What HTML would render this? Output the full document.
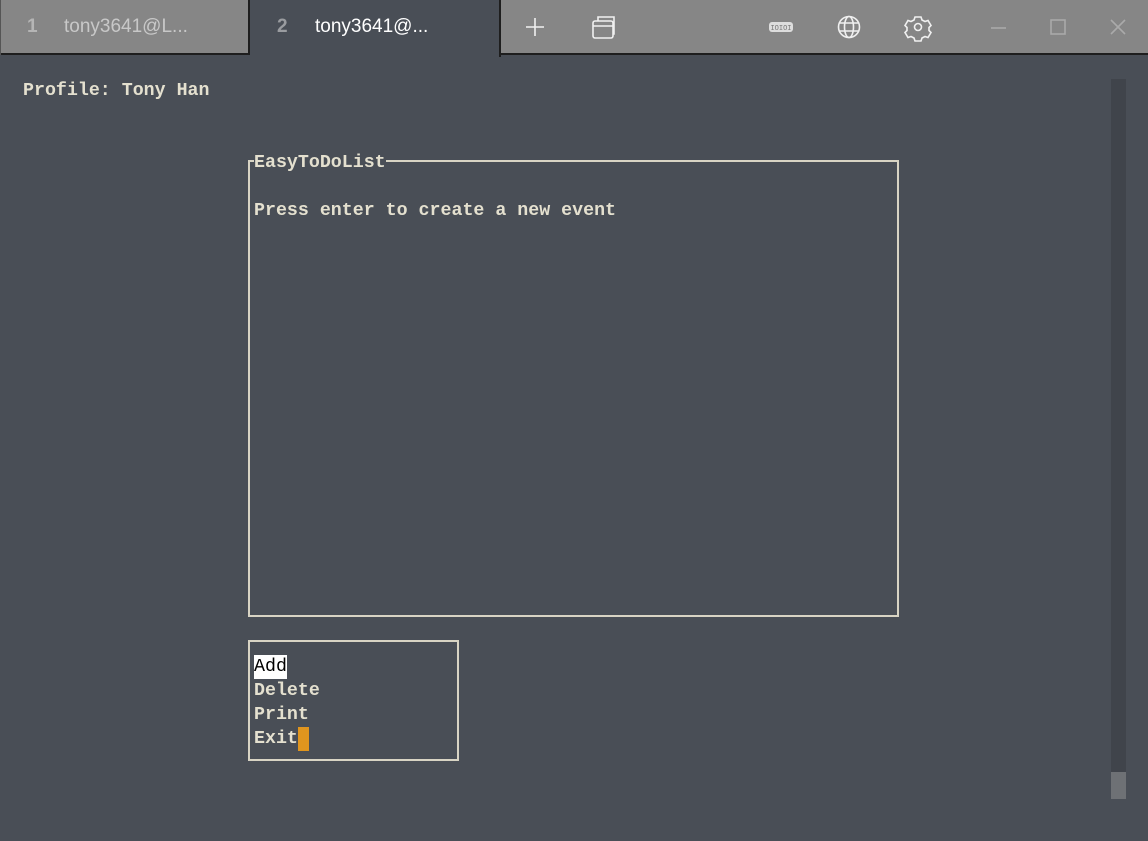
<!DOCTYPE html>
<html><head><meta charset="utf-8"><style>
*{margin:0;padding:0;box-sizing:border-box}
body{width:1148px;height:841px;background:#494e56;overflow:hidden;position:relative;font-family:"Liberation Sans",sans-serif}
.bar{position:absolute;left:0;top:0;width:1148px;height:55px;background:#868686;border-bottom:2px solid #1e1e1e}
.tab1{position:absolute;left:0;top:0;width:250px;height:55px;border-right:2px solid #1e1e1e;border-left:1px solid #555}
.tab2{position:absolute;left:250px;top:0;width:251px;height:57px;background:#494e56;border-right:2px solid #1e1e1e}
.t{position:absolute;top:16px;font-size:19px}
.mono{font-family:"Liberation Mono",monospace;font-weight:bold;font-size:18.3px;color:#e4e0cf;position:absolute;white-space:pre;line-height:24px}
.hl{position:absolute;background:#d8d4c4}
</style></head><body>
<div class="bar"></div>
<div class="tab1"><span class="t" style="left:26px;color:#b5b5b5;font-weight:bold">1</span><span class="t" style="left:63px;color:#c8c8c8">tony3641@L...</span></div>
<div class="tab2"><span class="t" style="left:27px;color:#9a9ca0;font-weight:bold">2</span><span class="t" style="left:65px;color:#fff">tony3641@...</span></div>
<svg style="position:absolute;left:0;top:0" width="1148" height="55" fill="none" stroke="#f0f0f0" stroke-width="1.6">
<path d="M526 27h18M535 18v18"/>
<rect x="593" y="21" width="20" height="17" rx="2"/><path d="M593 26h20M598 21v-4h16v17h-1"/>
<rect x="769" y="22" width="24" height="10" rx="3" fill="#ddd" stroke="none"/>
<text x="781" y="30" font-size="7" fill="#777" stroke="none" text-anchor="middle" font-family="Liberation Mono">IOIOI</text>
<circle cx="849" cy="27" r="10.5"/><ellipse cx="849" cy="27" rx="4.5" ry="10.5"/><path d="M839 23h20M839 31h20"/>
<circle cx="918" cy="27" r="3.5"/><path d="M915 17h6l1 3 3 1.5 3-1 3 5-2 2v3l2 2-3 5-3-1-3 1.5-1 3h-6l-1-3-3-1.5-3 1-3-5 2-2v-3l-2-2 3-5 3 1 3-1.5z"/>
<path d="M991 28h15" stroke="#aaa"/><rect x="1051" y="20" width="14" height="14" stroke="#aaa"/><path d="M1111 20l14 14M1125 20l-14 14" stroke="#aaa"/>
</svg>
<div class="mono" style="left:23px;top:79px">Profile: Tony Han</div>
<div class="hl" style="left:248px;top:160px;width:2px;height:457px"></div>
<div class="hl" style="left:897px;top:160px;width:2px;height:457px"></div>
<div class="hl" style="left:386px;top:160px;width:513px;height:2px"></div>
<div class="hl" style="left:248px;top:160px;width:6px;height:2px"></div>
<div class="hl" style="left:248px;top:615px;width:651px;height:2px"></div>
<div class="mono" style="left:254px;top:151px">EasyToDoList</div>
<div class="mono" style="left:254px;top:199px">Press enter to create a new event</div>
<div class="hl" style="left:248px;top:640px;width:211px;height:2px"></div>
<div class="hl" style="left:248px;top:759px;width:211px;height:2px"></div>
<div class="hl" style="left:248px;top:640px;width:2px;height:121px"></div>
<div class="hl" style="left:457px;top:640px;width:2px;height:121px"></div>
<div style="position:absolute;left:254px;top:655px;width:33px;height:24px;background:#fff"></div>
<div class="mono" style="left:254px;top:655px;color:#000;font-weight:normal">Add</div>
<div class="mono" style="left:254px;top:679px">Delete</div>
<div class="mono" style="left:254px;top:703px">Print</div>
<div class="mono" style="left:254px;top:727px">Exit</div>
<div style="position:absolute;left:298px;top:727px;width:11px;height:24px;background:#e0951e"></div>
<div style="position:absolute;left:1111px;top:79px;width:15px;height:720px;background:#40444b"></div>
<div style="position:absolute;left:1111px;top:772px;width:15px;height:27px;background:#6e7175"></div>
</body></html>
